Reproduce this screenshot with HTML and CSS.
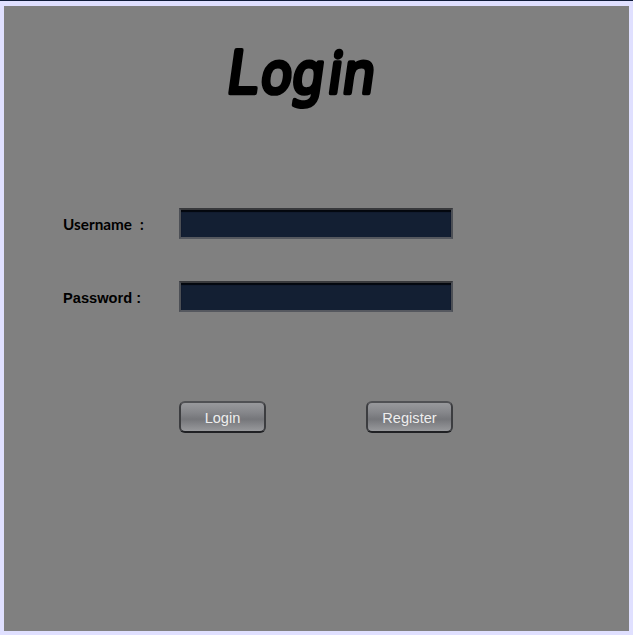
FILE: index.html
```
<!DOCTYPE html>
<html lang="en">
<head>
<meta charset="utf-8">
<title>Login</title>
<link rel="stylesheet" href="styles.css">
</head>
<body>
<main class="panel">
  <h1><svg class="title" width="200" height="90" viewBox="0 0 200 90"><text x="13 50 85 125 141" y="0" transform="matrix(.9 0 -.14 1 0 55)"><tspan class="initial">L</tspan>ogin</text></svg></h1>
  <form class="form">
    <label class="casual" for="user"><svg width="100" height="24"><text x="0" y="18" textLength="69" lengthAdjust="spacingAndGlyphs">Username</text><text x="77" y="18">:</text></svg></label>
    <input id="user" type="text">
    <label for="pass"><svg width="100" height="24"><text x="0" y="18" textLength="78" lengthAdjust="spacingAndGlyphs">Password :</text></svg></label>
    <input id="pass" type="password">
    <div class="actions">
      <button type="button">Login</button>
      <button type="button">Register</button>
    </div>
  </form>
</main>
</body>
</html>
```
FILE: styles.css
```
* { box-sizing: border-box; }
html { height: 100%; }
body {
  margin: 0;
  height: 635px;
  padding: 5px 4px 4px;
  border-top: 1px solid #101c3a;
  background: #e0e0ff;
  font-family: "Liberation Sans", Arial, sans-serif;
  overflow: hidden;
}
.panel {
  height: 625px;
  padding: 32px 0 0 59px;
  background: #808080;
}
h1 { margin: 0 0 0 151px; height: 80px; }
.title { display: block; overflow: visible; }
.title text {
  font: 400 57px "Comic Sans MS", "Noto Sans", sans-serif;
  stroke: #000;
  stroke-width: 4.6;
  stroke-linejoin: round;
}
.title .initial { font-family: "Comic Sans MS", "Liberation Sans", sans-serif; font-size: 62px; }
.form {
  display: grid;
  grid-template-columns: 116px 274px;
  grid-template-rows: 31px 31px;
  row-gap: 42px;
  align-items: center;
  margin-top: 90px;
}
label { height: 24px; line-height: 0; }
label text { font: 700 14.5px "Liberation Sans", Arial, sans-serif; }
.casual text {
  font: 700 14.5px "Comic Sans MS", Lato, sans-serif;
}
input {
  width: 274px;
  height: 31px;
  padding: 4px;
  border: 2px solid;
  border-color: #38393c #4c4f55 #55585f #4c4f55;
  background: #131f33;
  box-shadow: inset 0 2px 1px #03060d;
  color: #eee;
  outline: 0;
}
.actions {
  grid-column: 2;
  display: flex;
  justify-content: space-between;
  margin-top: 47px;
}
button {
  width: 87px;
  height: 32px;
  padding: 2px 0 0;
  border: 2px solid;
  border-color: #505154 #3c3d40 #202124 #3c3d40;
  border-radius: 6px;
  background: linear-gradient(#98999c, #85868a 35%, #75767a 58%, #98999c);
  color: #eee;
  font: 14.6px "Liberation Sans", Arial, sans-serif;
}
```
